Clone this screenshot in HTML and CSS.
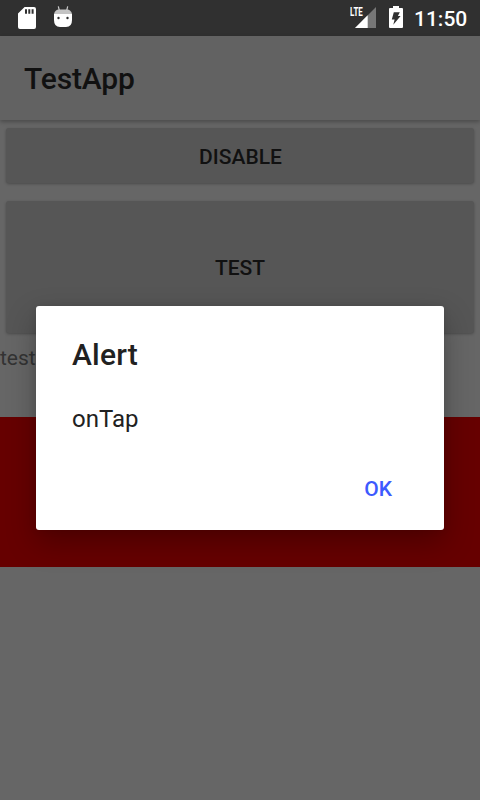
FILE: index.html
```html
<!DOCTYPE html>
<html lang="en">
<head>
<meta charset="utf-8">
<title>TestApp</title>
<link rel="stylesheet" href="styles.css">
</head>
<body>
<div class="screen">
  <header class="status">
    <svg class="sd" width="18" height="22" viewBox="0 0 18 22"><path fill="#fff" fill-rule="evenodd" d="M6.6 0H16a2 2 0 0 1 2 2v18a2 2 0 0 1-2 2H2a2 2 0 0 1-2-2V6.6zM7 2.300v4.500h2V2.300zM10.300 2.300v4.500h2V2.300zM13.600 2.300v4.500h2V2.300z"/></svg>
    <svg class="droid" width="18" height="22" viewBox="0 0 18 22"><path fill="#fff" d="M0 8h18v6q0 7-6 7H6q-6 0-6-7z"/><path fill="#c4c4c4" d="M0 8q1-4.500 5-4.500h8q4 0 5 4.500z"/><path stroke="#ccc" stroke-width="1.2" d="M4.300 .3l1 4M13.700 .3l-1 4"/><circle cx="4.500" cy="12" r="1.200" fill="#303030"/><circle cx="13.500" cy="12" r="1.200" fill="#303030"/></svg>
    <div class="signal">
      <svg width="21" height="21" viewBox="0 0 21 21"><path fill="#777" d="M21 0v21H0z"/><path fill="#fff" d="M12.700 8.300V21H0z"/></svg>
      <span class="lte">LTE</span>
    </div>
    <svg class="battery" width="14" height="22" viewBox="0 0 14 22"><path fill="#fff" d="M4 0h6v2h3q1 0 1 1v18q0 1-1 1H1q-1 0-1-1V3q0-1 1-1h3z"/><path fill="#303030" d="M4.800 6.200h6L8.900 10h2.700L4.300 18.700l1.300-5.200H2.800z"/></svg>
    <span class="clock">11:50</span>
  </header>
  <div class="appbar">TestApp</div>
  <main>
    <button class="btn">DISABLE</button>
    <button class="btn tall">TEST</button>
    <div class="label">test</div>
    <div class="red"></div>
  </main>
  <div class="dialog" role="dialog">
    <div class="title">Alert</div>
    <div class="message">onTap</div>
    <div class="actions"><span class="ok">OK</span></div>
  </div>
</div>
</body>
</html>
```
FILE: styles.css
```css
* { box-sizing: border-box; }
body { margin: 0; font-family: Roboto, sans-serif; }
.screen {
  position: relative;
  width: 480px;
  height: 800px;
  overflow: hidden;
  background: #666;
}
.status {
  display: flex;
  height: 36px;
  padding: 7px 12px 0 18px;
  background: #303030;
  color: #fff;
}
.droid { margin: -1px 0 0 18px; }
.signal { position: relative; margin: 0 13px 0 auto; height: 21px; }
.signal svg { display: block; }
.lte {
  position: absolute;
  left: -5px;
  top: -1px;
  font-size: 12px;
  line-height: 12px;
  font-weight: 700;
  transform: scaleX(.66);
  transform-origin: left;
}
.battery { margin: -1px 11px 0 0; }
.clock { font-size: 21px; line-height: 24px; font-weight: 500; width: 54px; white-space: nowrap; }
.appbar {
  position: relative;
  height: 84px;
  padding: 0 24px;
  font-size: 30px;
  line-height: 85px;
  font-weight: 500;
  letter-spacing: -.15px;
  color: #111;
  background: #626262;
  box-shadow: 0 2px 4px rgba(0, 0, 0, .27);
}
main { display: flex; flex-direction: column; padding-top: 8px; }
.btn {
  height: 55px;
  margin: 0 6px 18px;
  padding: 2px 0 0 1px;
  border: 0;
  border-radius: 3px;
  background: #565656;
  box-shadow: 0 1px 3px rgba(0, 0, 0, .28);
  color: #111;
  font: 500 21px/24px Roboto, sans-serif;
}
.tall { height: 132px; margin-bottom: 12px; padding-left: 0; }
.label { height: 72px; padding-top: 1px; font-size: 21px; line-height: 25px; color: #333; }
.red { height: 150px; background: #600; }
.dialog {
  position: absolute;
  left: 36px;
  top: 306px;
  width: 408px;
  height: 224px;
  padding: 31px 36px 0;
  border-radius: 3px;
  background: #fff;
  color: #212121;
  box-shadow: 0 12px 30px rgba(0, 0, 0, .28), 0 0 9px rgba(0, 0, 0, .08);
}
.title { font-size: 30px; line-height: 36px; font-weight: 500; letter-spacing: .2px; }
.message { margin-top: 32px; font-size: 24px; line-height: 28px; }
.actions { display: flex; justify-content: flex-end; margin-top: 44px; padding-right: 16px; }
.ok { font-size: 21px; line-height: 24px; font-weight: 500; color: #3d5afe; }
```
